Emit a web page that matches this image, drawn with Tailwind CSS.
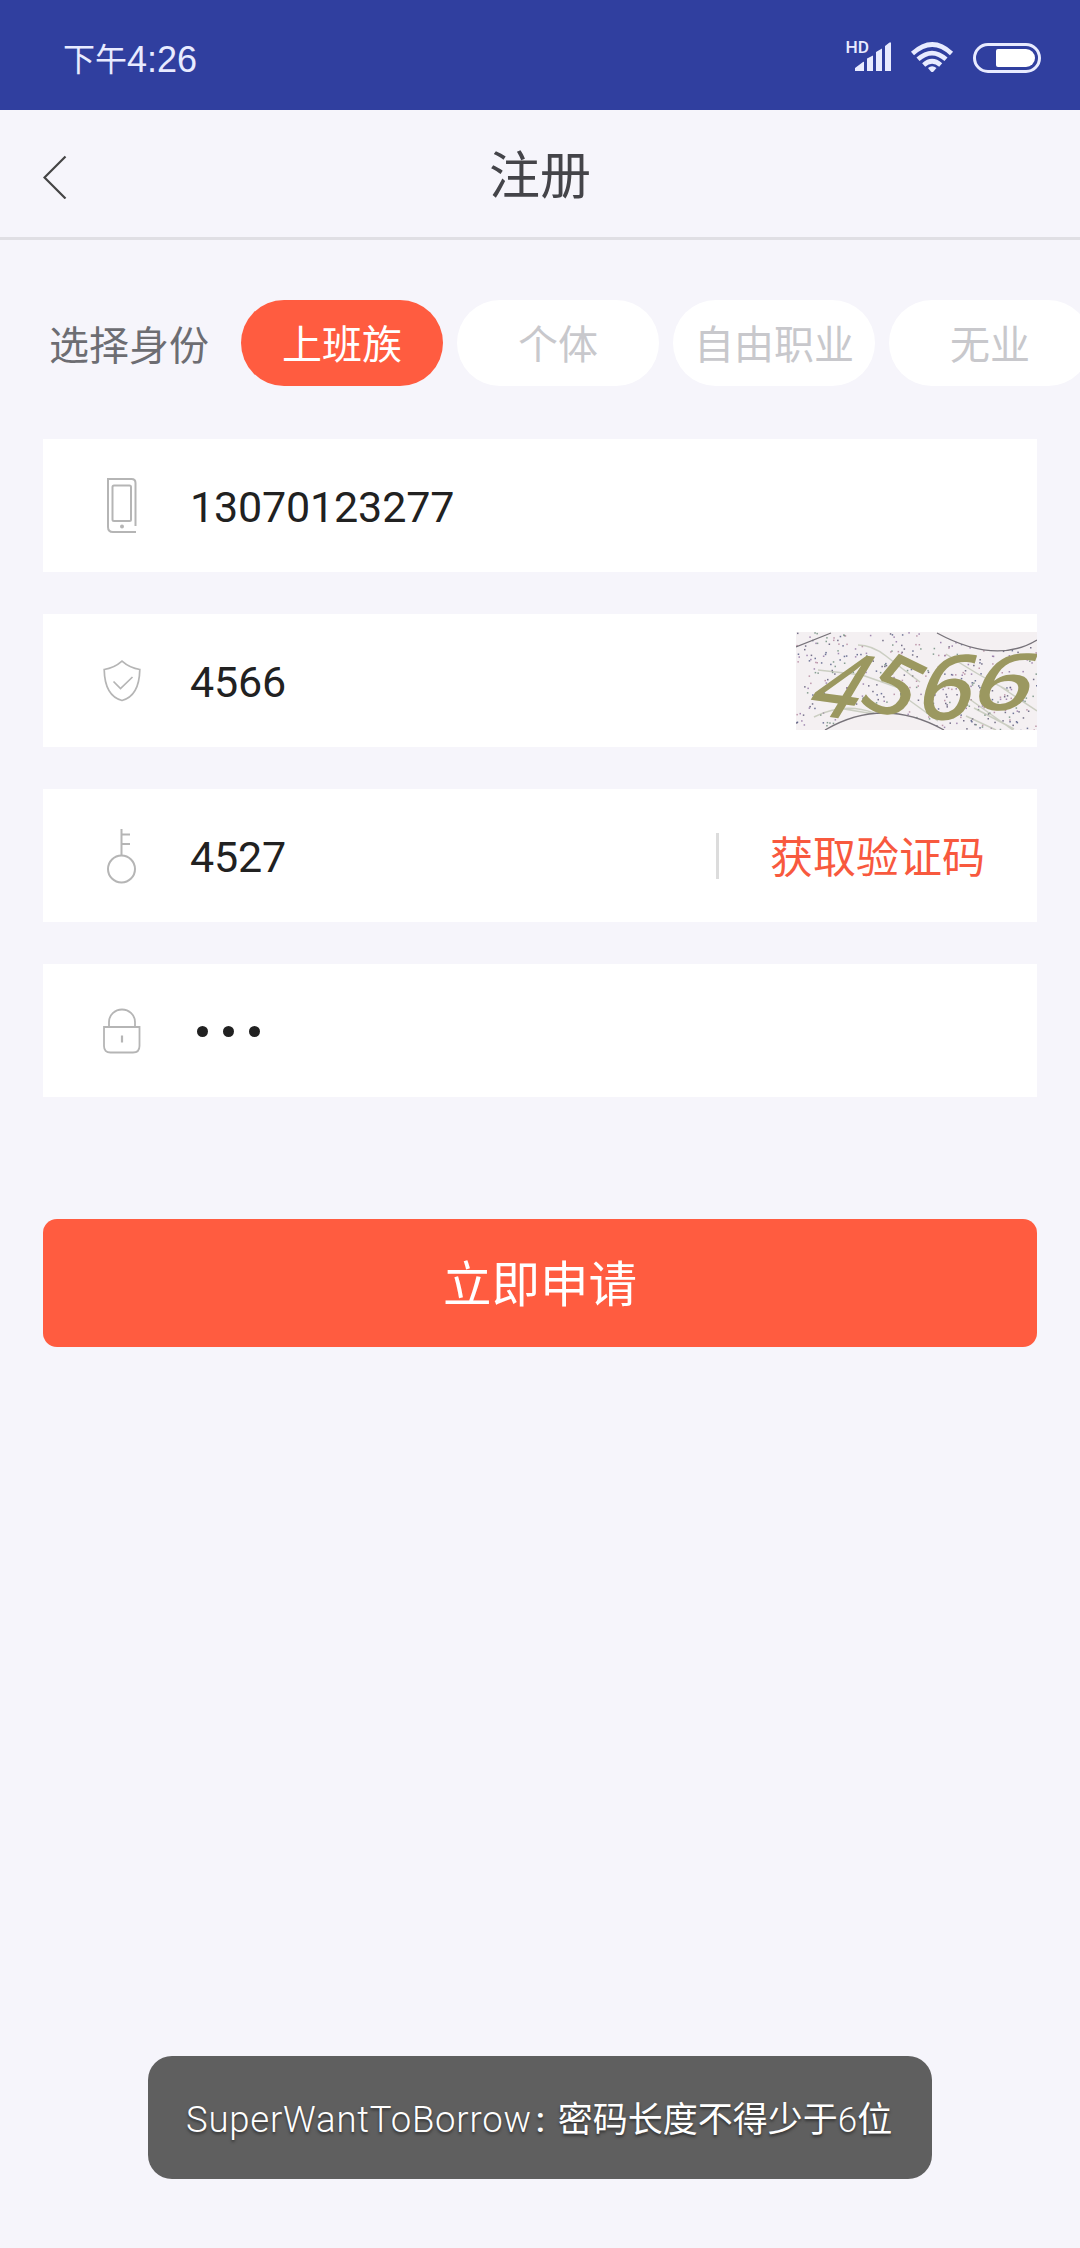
<!DOCTYPE html>
<html lang="zh-CN">
<head>
<meta charset="utf-8">
<title>注册</title>
<script src="https://cdn.jsdelivr.net/npm/@tailwindcss/browser@4"></script>
</head>
<body class="relative h-[2248px] w-[1080px] overflow-hidden bg-[#f6f5fb] font-['Roboto','Noto_Sans_CJK_SC',sans-serif]">
  <!-- Status bar -->
  <div class="flex h-[110px] items-center justify-between bg-[#303f9f] pr-[39px] pl-[63px] text-[#e8ebff]">
    <div class="flex items-center pt-[10px] leading-none"><span class="text-[32px]">下午</span><span class="font-['Liberation_Sans'] text-[36px]">4:26</span></div>
    <svg class="mt-[6px] h-[40px] w-[196px]" viewBox="846 38 196 40" fill="#e8ebff">
      <text x="846.5" y="53" font-family="Roboto" font-weight="500" font-size="16.500" textLength="23.500" lengthAdjust="spacingAndGlyphs">HD</text>
      <path d="M856 71v-3l8-6q1-.5 1 .5V71zM868 71V58.500l6-3V71zM877 71V52l6-3.500V71zM886 71V46l4.500-3.500H892V71z"/>
      <g fill="none" stroke="#e8ebff" stroke-width="4.600"><path d="M913.500 53.500q20-18 39 0"/><path d="M919 59.300q14-12.500 28 0"/><path d="M924.700 65q8.300-7.500 17 0"/></g>
      <path d="M929 68q4-3.500 8.500 0l-3 3.500q-1.300 1-2.600 0z"/>
      <rect x="975.500" y="44.500" width="65" height="27" rx="13.500" fill="none" stroke="#e8ebff" stroke-width="3"/>
      <path d="M999 49h28a9 9 0 0 1 0 18h-28q-2 0-2-2V51q0-2 2-2z" fill="#fff"/>
    </svg>
  </div>

  <!-- Title bar -->
  <header class="grid h-[130px] grid-cols-3 items-center border-b-3 border-[#e0dfe4] pt-[5px]">
    <svg class="mt-[2px] ml-[43px] h-[44px] w-[24px]" viewBox="0 0 24 44" fill="none" stroke="#444" stroke-width="2.200"><path d="M22.500 1.500 1.500 22.500l21 21" /></svg>
    <h1 class="text-center text-[51px] leading-none text-[#444449]">注册</h1>
  </header>

  <!-- Identity chips -->
  <div class="mt-[60px] flex items-center gap-[14px] text-[40px] leading-none">
    <span class="ml-[49px] w-[178px] shrink-0 pt-[7px] whitespace-nowrap text-[#6d6d72]">选择身份</span>
    <button class="h-[86px] w-[202px] shrink-0 rounded-full bg-[#ff5c40] pt-[6px] text-white">上班族</button>
    <button class="h-[86px] w-[202px] shrink-0 rounded-full bg-white pt-[6px] text-[#c8c8cc]">个体</button>
    <button class="h-[86px] w-[202px] shrink-0 rounded-full bg-white pt-[6px] text-[#c8c8cc]">自由职业</button>
    <button class="h-[86px] w-[202px] shrink-0 rounded-full bg-white pt-[6px] text-[#c8c8cc]">无业</button>
  </div>

  <!-- Form -->
  <main class="mx-[43px] mt-[53px] flex flex-col gap-[42px] text-[43px] leading-none text-[#212121]">
    <div class="flex h-[133px] items-center bg-white pl-[59px]">
      <svg class="h-[58px] w-[40px]" viewBox="0 0 40 58" fill="none" stroke="#b5b5b5" stroke-width="2"><path d="M33.500 49V6q0-4-4-4H6v48q0 5 5 5h23" /><rect x="10.500" y="8.500" width="18.500" height="35.500" rx="1.500"/><circle cx="20" cy="49.500" r="2" fill="#b5b5b5" stroke="none"/></svg>
      <span class="ml-[48px] pt-1 tracking-[-0.15px]">13070123277</span>
    </div>
    <div class="flex h-[133px] items-center bg-white pl-[59px]">
      <svg class="h-[42px] w-[40px]" viewBox="0 0 40 42" fill="none" stroke="#b5b5b5" stroke-width="1.700"><path d="M20 1.200Q12 8.200 2.200 9.500C2.500 25 7 37 20 40.500 33 37 37.500 25 37.800 9.500Q28 8.200 20 1.200z"/><path d="m11.500 21.500 7 7 12-11.500"/></svg>
      <span class="ml-[48px] pt-1 tracking-[-0.15px]">4566</span>
      <svg class="ml-auto h-[98px] w-[241px] bg-[#f4f0f2]" viewBox="0 0 241 98" fill="none">
        <g id="noise"></g>
        <g stroke="#a9b39b" stroke-opacity=".55" stroke-width="1.500"><path d="M62 13q14 0 28 11t34 26M22 38l44 5 40 14M18 85q30-15 60-4M106 63l36 26M150 22q30 20 63 37M172 66l45 32M178 76l40 21M170 84l30 14M48 77l30 5M205 55l36 24"/></g>
        <path d="M29 98Q87 64 148 98z" fill="#f4f0f2"/><path d="M141 1Q200 33 241 8V0H141z" fill="#f4f0f2"/>
        <path d="M29 98Q87 64 148 98M141 1Q200 33 241 8M0 15l35-14" stroke="#77737a" stroke-width="1.300"/>
        <g fill="#9b9860" font-family="Noto Sans" font-weight="500" font-size="92">
          <text transform="translate(5 81) rotate(8) skewX(-23) scale(.9 1)">4</text>
          <text transform="translate(59 69) rotate(26) skewX(-9) scale(.95 .94)">5</text>
          <text transform="translate(117 86) rotate(3) skewX(-13) scale(1.04 1)">6</text>
          <text transform="translate(171 77) rotate(2) skewX(-20) scale(1.1 .87)">6</text>
        </g>
      </svg>
    </div>
    <div class="flex h-[133px] items-center bg-white pl-[59px]">
      <svg class="h-[56px] w-[40px]" viewBox="0 0 40 56" fill="none" stroke="#b5b5b5" stroke-width="2"><circle cx="19.500" cy="41" r="13.500"/><path d="M19.500 27.500V1M19.500 6.500H28M19.500 16H28"/></svg>
      <span class="ml-[48px] pt-1 tracking-[-0.15px]">4527</span>
      <span class="ml-auto h-[46px] w-[3px] bg-[#dcdcdc]"></span>
      <button class="mr-[52px] ml-[51px] pt-[5px] text-[#f8593e]">获取验证码</button>
    </div>
    <div class="flex h-[133px] items-center bg-white pl-[59px]">
      <svg class="h-[46px] w-[40px]" viewBox="0 0 40 46" fill="none" stroke="#b5b5b5" stroke-width="1.800"><path d="M2 19h35.500v19q0 6.500-6.500 6.500H8.500Q2 44.500 2 38zM7 19v-5a13 12.500 0 0 1 26 0v5"/><path d="M20 27.500v7" stroke-width="2.200"/></svg>
      <span class="ml-[55px] flex gap-[15px] pt-[2px]"><i class="size-[11px] rounded-full bg-[#212121]"></i><i class="size-[11px] rounded-full bg-[#212121]"></i><i class="size-[11px] rounded-full bg-[#212121]"></i></span>
    </div>
    <button class="mt-[80px] h-[128px] rounded-[14px] bg-[#ff5c40] pt-[6px] text-[48.500px] text-white">立即申请</button>
  </main>

  <!-- Toast -->
  <div class="absolute top-[2056px] left-[148px] flex h-[123px] w-[784px] items-center rounded-[24px] bg-[#5f5f5f] pt-[5px] pl-[38px] text-[35px] leading-none whitespace-nowrap text-white text-shadow-[0_2px_3px_rgb(0_0_0/0.5)]">
    <span class="text-[36.500px] font-light tracking-[0.8px]">SuperWantToBorrow</span><span class="ml-1 w-[22px] font-medium">:</span><span>密码长度不得少于<span class="font-light">6</span>位</span>
  </div>

  <script>
    // Speckles behind the verification digits, from a fixed seed
    let seed = 7;
    const rnd = () => (seed = (seed * 16807) % 2147483647) / 2147483647;
    const colors = ['#55506e', '#8d6fa0', '#6a8a78', '#b0839b', '#4d5580'];
    let dots = '';
    for (let i = 0; i < 420; i++) {
      dots += `<rect x="${(rnd() * 241).toFixed(1)}" y="${(rnd() * 98).toFixed(1)}" width="1.5" height="1.5" fill="${colors[i % 5]}" opacity=".8"/>`;
    }
    document.getElementById('noise').innerHTML = dots;
  </script>
</body>
</html>
